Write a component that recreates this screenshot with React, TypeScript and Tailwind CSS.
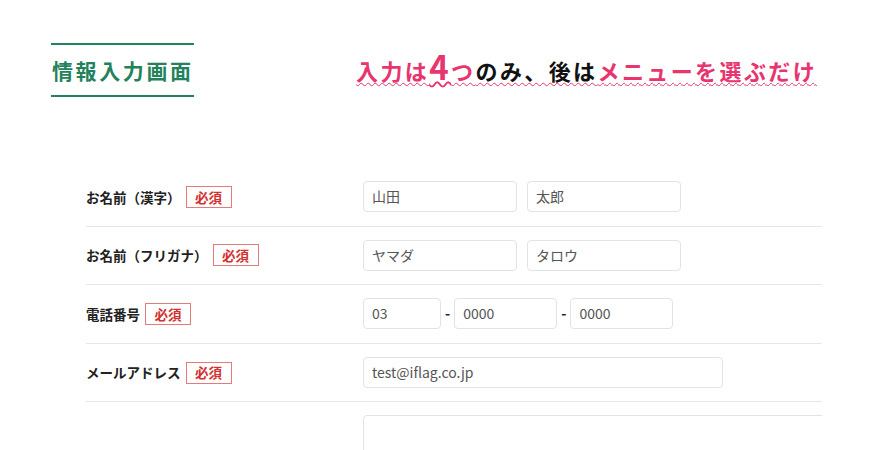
import React from 'react';

const font = { fontFamily: '"Noto Sans CJK JP", "Noto Sans", sans-serif' };

function Badge() {
  return (
    <span className="inline-flex h-[22px] w-[46px] items-center justify-center border border-[#e37b7b] text-[13.5px] font-semibold text-[#d2312f]">
      必須
    </span>
  );
}

function Field({ className }: { className: string }) {
  return <div className={`h-[31px] rounded-[4px] border border-[#e3e3e3] bg-white ${className}`} />;
}

function Input({ value, className }: { value: string; className: string }) {
  return (
    <div className={`flex h-[31px] items-center rounded-[4px] border border-[#e3e3e3] bg-white pl-[8px] text-[14px] text-[#555] ${className}`}>
      {value}
    </div>
  );
}

function Row({ label, children }: { label: string; children: React.ReactNode }) {
  return (
    <div className="flex h-[58.6px] items-center border-b border-[#e6e6e6]">
      <div className="flex w-[277px] items-center gap-[5px]">
        <span className="text-[13.5px] font-bold text-[#222]">{label}</span>
        <Badge />
      </div>
      <div className="flex items-center">{children}</div>
    </div>
  );
}

const wave = 'underline decoration-wavy decoration-[#e8346f] decoration-[1px] underline-offset-[2px]';

export default function App() {
  return (
    <div className="h-[450px] w-[885px] overflow-hidden bg-white" style={font}>
      <div className="flex items-center pl-[51px] pt-[43px]">
        <div className="flex h-[54px] w-[143px] items-center border-y-2 border-[#23825b] pl-[1px]">
          <h1 className="whitespace-nowrap text-[21px] font-bold leading-none tracking-[2.6px] text-[#23825b]">情報入力画面</h1>
        </div>
        <p className="mb-[8px] ml-[162px] whitespace-nowrap text-[22px] font-bold leading-none tracking-[2.4px] text-[#111]">
          <span className={`${wave} text-[#e8346f]`}>入力は</span>
          <span className="text-[33px] text-[#e8346f] underline decoration-wavy decoration-[#e8346f] decoration-[1.5px] underline-offset-[1px]">4</span>
          <span className={`${wave} text-[#e8346f]`}>つ</span>
          <span className={wave}>のみ、後は</span>
          <span className={`${wave} text-[#e8346f]`}>メニューを選ぶだけ</span>
        </p>
      </div>

      <div className="ml-[86px] mt-[71px] w-[736px] overflow-hidden">
        <Row label="お名前（漢字）">
          <Input value="山田" className="w-[154px]" />
          <Input value="太郎" className="ml-[10px] w-[154px]" />
        </Row>
        <Row label="お名前（フリガナ）">
          <Input value="ヤマダ" className="w-[154px]" />
          <Input value="タロウ" className="ml-[10px] w-[154px]" />
        </Row>
        <Row label="電話番号">
          <Input value="03" className="w-[78px]" />
          <span className="mx-[4px] text-[14px] font-bold text-[#222]">-</span>
          <Input value="0000" className="w-[103px]" />
          <span className="mx-[4px] text-[14px] font-bold text-[#222]">-</span>
          <Input value="0000" className="w-[103px]" />
        </Row>
        <Row label="メールアドレス">
          <Input value="test@iflag.co.jp" className="w-[360px]" />
        </Row>
        <div className="flex pt-[13px]">
          <div className="w-[277px] shrink-0" />
          <Field className="h-[80px] w-[520px] shrink-0" />
        </div>
      </div>
    </div>
  );
}
